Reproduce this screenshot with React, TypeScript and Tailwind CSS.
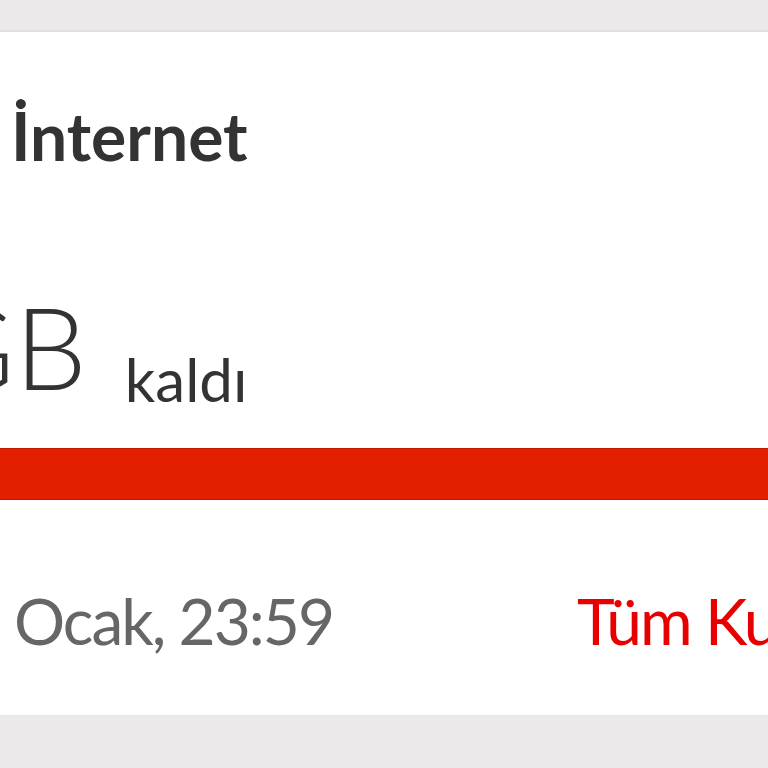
export default function App() {
  return (
    <div className="w-[768px] h-[768px] overflow-hidden bg-[#ebe9ea] pt-[32px] font-['Lato','Open_Sans',sans-serif]">
      <div className="h-[683px] bg-white shadow-[0_-1px_3px_rgba(0,0,0,0.08)] flex flex-col">
        {/* title */}
        <h2 className="mt-[71px] pl-[11px] text-[66px] leading-none font-bold text-[#333333] whitespace-nowrap">
          İnternet
        </h2>

        {/* remaining amount */}
        <div className="mt-[120px] flex items-start whitespace-nowrap text-[#333333]">
          <span className="-ml-[69px] text-[114px] leading-none font-light">GB</span>
          <span className="ml-[38px] mt-[60px] text-[60px] leading-none">kaldı</span>
        </div>

        {/* usage bar */}
        <div className="mt-[39px] h-[52px] w-full bg-[#e31f00] border-y border-[#c41a00]" />

        {/* footer */}
        <div className="mt-[89px] flex items-start whitespace-nowrap text-[64px] leading-none tracking-[-2px]">
          <span className="pl-[14px] text-[#666666]">Ocak, 23:59</span>
          <span className="ml-[244px] text-[#e60000]">Tüm Kullanımlar</span>
        </div>
      </div>
    </div>
  );
}
